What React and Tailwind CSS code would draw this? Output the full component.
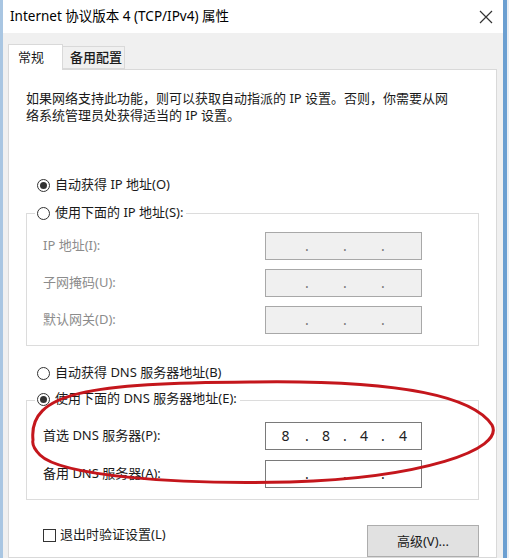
import React from "react";

const FONT = { fontFamily: '"Noto Sans", "Noto Sans CJK SC", sans-serif' };

function Radio({ checked }) {
  return (
    <span className="w-[13px] h-[13px] rounded-full border border-[#333] bg-white flex items-center justify-center shrink-0">
      {checked && <span className="w-[7px] h-[7px] rounded-full bg-[#333]" />}
    </span>
  );
}

function IpField({ values, disabled }) {
  const segCls = "h-full flex items-center justify-center";
  const dotCls = `w-[4px] h-full flex items-center justify-center ${disabled ? "text-[#777]" : "text-[#222]"}`;
  const v = values || ["", "", "", ""];
  return (
    <div
      className={`w-[157px] h-[28px] border flex text-[14px] leading-none ${
        disabled ? "bg-[#f0f0f0] border-[#a8a8a8]" : "bg-white border-[#7a7a7a] text-[#222]"
      }`}
    >
      <div className={`${segCls} w-[39px]`}>{v[0]}</div>
      <div className={dotCls}>.</div>
      <div className={`${segCls} w-[34px]`}>{v[1]}</div>
      <div className={dotCls}>.</div>
      <div className={`${segCls} w-[34px]`}>{v[2]}</div>
      <div className={dotCls}>.</div>
      <div className={`${segCls} flex-1`}>{v[3]}</div>
    </div>
  );
}

function FieldRow({ label, disabled, values, className = "" }) {
  return (
    <div className={`flex items-center pl-[16px] ${className}`}>
      <div className={`w-[222px] ${disabled ? "text-[#8c8c8c]" : "text-[#1a1a1a]"}`}>{label}</div>
      <IpField disabled={disabled} values={values} />
    </div>
  );
}

export default function App() {
  return (
    <div
      className="relative w-[509px] h-[558px] overflow-hidden bg-white flex text-[13px] text-[#1a1a1a]"
      style={FONT}
    >
      <div className="w-[3px] h-full bg-[#a9c6e2]" />
      <div className="w-[500px] h-full flex flex-col">
        {/* title bar */}
        <div className="h-[33px] bg-white flex items-center justify-between pl-[7px] pr-[8px] shrink-0">
          <span className="text-[13.5px] text-black">Internet 协议版本 4 (TCP/IPv4) 属性</span>
          <svg width="14" height="14" viewBox="0 0 14 14" className="mr-[2px]">
            <path d="M1 1 L13 13 M13 1 L1 13" stroke="#333" strokeWidth="1.2" fill="none" />
          </svg>
        </div>
        {/* body */}
        <div className="flex-1 bg-[#f0f0f0] pl-[5px] pr-[6px] pt-[10px] flex flex-col">
          {/* tabs */}
          <div className="flex items-end h-[26px] relative z-10">
            <div className="w-[55px] h-[26px] bg-white border border-[#d9d9d9] border-b-0 flex items-center pl-[9px] -mb-px">
              常规
            </div>
            <div className="w-[62px] h-[23px] bg-[#f0f0f0] border border-[#d9d9d9] border-l-0 flex items-center pl-[7px] font-medium">
              备用配置
            </div>
          </div>
          {/* panel */}
          <div className="flex-1 bg-white border border-[#d9d9d9] pl-[17px] pt-[20px] pr-[16px]">
            <p className="leading-[17px] w-[428px]">
              如果网络支持此功能，则可以获取自动指派的 IP 设置。否则，你需要从网络系统管理员处获得适当的 IP 设置。
            </p>

            <div className="mt-[51px] h-[20px] flex items-center gap-[5px] ml-[11px]">
              <Radio checked />
              <span>自动获得 IP 地址(O)</span>
            </div>

            <div className="mt-[18px] w-[453px] border border-[#dcdcdc] pb-[11px]">
              <div className="-mt-[11px] ml-[8px] h-[20px] w-fit flex items-center gap-[5px] bg-white pl-[2px] pr-[3px]">
                <Radio />
                <span>使用下面的 IP 地址(S):</span>
              </div>
              <FieldRow label="IP 地址(I):" disabled className="mt-[9px]" />
              <FieldRow label="子网掩码(U):" disabled className="mt-[9px]" />
              <FieldRow label="默认网关(D):" disabled className="mt-[9px]" />
            </div>

            <div className="mt-[17px] h-[20px] flex items-center gap-[5px] ml-[11px]">
              <Radio />
              <span>自动获得 DNS 服务器地址(B)</span>
            </div>

            <div className="mt-[17px] w-[453px] border border-[#dcdcdc] pb-[11px]">
              <div className="-mt-[12px] ml-[8px] h-[20px] w-fit flex items-center gap-[5px] bg-white pl-[2px] pr-[3px]">
                <Radio checked />
                <span>使用下面的 DNS 服务器地址(E):</span>
              </div>
              <FieldRow label="首选 DNS 服务器(P):" values={["8", "8", "4", "4"]} className="mt-[13px]" />
              <FieldRow label="备用 DNS 服务器(A):" className="mt-[10px]" />
            </div>

            <div className="mt-[25px] w-[453px] flex items-start justify-between">
              <div className="h-[20px] flex items-center gap-[4px] pl-[17px]">
                <span className="w-[13px] h-[13px] border border-[#333] bg-white shrink-0" />
                <span>退出时验证设置(L)</span>
              </div>
              <div className="w-[112px] h-[32px] bg-[#e1e1e1] border border-[#adadad] flex items-center justify-center pt-[2px]">
                高级(V)...
              </div>
            </div>
          </div>
        </div>
      </div>
      <div className="w-[4px] h-full bg-[#6b9fd1]" />
      <div className="w-[2px] h-full bg-[#e9eef4]" />

      {/* red hand-drawn annotation loop */}
      <svg className="absolute inset-0 pointer-events-none" width="509" height="558" viewBox="0 0 509 558">
        <path
          d="M 33 440 C 28 392, 90 383, 250 382 C 380 380, 470 392, 492 425 C 505 450, 420 478, 290 482 C 170 485, 60 475, 40 455 C 33 448, 32 444, 33 440 Z"
          fill="none"
          stroke="#c4161c"
          strokeWidth="3"
          strokeLinejoin="round"
        />
      </svg>
    </div>
  );
}
